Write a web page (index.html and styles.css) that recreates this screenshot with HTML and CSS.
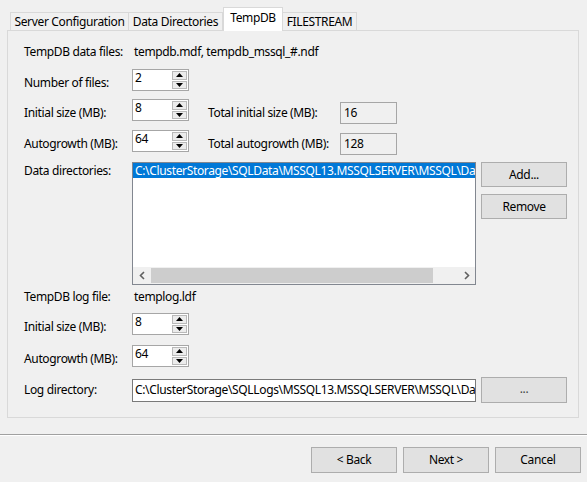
FILE: index.html
```html
<!DOCTYPE html>
<html>
<head>
<meta charset="utf-8">
<title>TempDB</title>
<link rel="stylesheet" href="styles.css">
</head>
<body>
<div class="window">
  <div class="tabs">
    <div class="tab t1">Server Configuration</div>
    <div class="tab t2">Data Directories</div>
    <div class="tab active t3">TempDB</div>
    <div class="tab t4">FILESTREAM</div>
  </div>
  <div class="panel">
    <div class="row row-a">
      <div class="label">TempDB data files:</div>
      <div class="value">tempdb.mdf, tempdb_mssql_#.ndf</div>
    </div>
    <div class="row row-b">
      <div class="label lbl-spin">Number of files:</div>
      <div class="spin">
        <span class="spin-text">2</span>
        <span class="spin-btns">
          <span class="sb"><svg width="7" height="4" viewBox="0 0 7 4"><path d="M0 4 L3.5 0 L7 4Z"/></svg></span>
          <span class="sb"><svg width="7" height="4" viewBox="0 0 7 4"><path d="M0 0 L3.5 4 L7 0Z"/></svg></span>
        </span>
      </div>
    </div>
    <div class="row row-c">
      <div class="label lbl-spin">Initial size (MB):</div>
      <div class="spin">
        <span class="spin-text">8</span>
        <span class="spin-btns">
          <span class="sb"><svg width="7" height="4" viewBox="0 0 7 4"><path d="M0 4 L3.5 0 L7 4Z"/></svg></span>
          <span class="sb"><svg width="7" height="4" viewBox="0 0 7 4"><path d="M0 0 L3.5 4 L7 0Z"/></svg></span>
        </span>
      </div>
      <div class="label2">Total initial size (MB):</div>
      <div class="robox">16</div>
    </div>
    <div class="row row-d">
      <div class="label lbl-spin">Autogrowth (MB):</div>
      <div class="spin">
        <span class="spin-text">64</span>
        <span class="spin-btns">
          <span class="sb"><svg width="7" height="4" viewBox="0 0 7 4"><path d="M0 4 L3.5 0 L7 4Z"/></svg></span>
          <span class="sb"><svg width="7" height="4" viewBox="0 0 7 4"><path d="M0 0 L3.5 4 L7 0Z"/></svg></span>
        </span>
      </div>
      <div class="label2">Total autogrowth (MB):</div>
      <div class="robox">128</div>
    </div>
    <div class="row row-e">
      <div class="label lbl-list">Data directories:</div>
      <div class="listbox">
        <div class="list-item">C:\ClusterStorage\SQLData\MSSQL13.MSSQLSERVER\MSSQL\Data</div>
        <div class="list-fill"></div>
        <div class="hscroll">
          <span class="arrow"><svg width="6" height="9" viewBox="0 0 6 9"><polyline points="5,1 1.5,4.5 5,8" fill="none" stroke="#606060" stroke-width="1.6"/></svg></span>
          <span class="thumb"></span>
          <span class="track"></span>
          <span class="arrow"><svg width="6" height="9" viewBox="0 0 6 9"><polyline points="1,1 4.5,4.5 1,8" fill="none" stroke="#606060" stroke-width="1.6"/></svg></span>
        </div>
      </div>
      <div class="side-btns">
        <div class="btn side-btn">Add...</div>
        <div class="btn side-btn">Remove</div>
      </div>
    </div>
    <div class="row row-f">
      <div class="label">TempDB log file:</div>
      <div class="value">templog.ldf</div>
    </div>
    <div class="row row-g">
      <div class="label lbl-spin">Initial size (MB):</div>
      <div class="spin">
        <span class="spin-text">8</span>
        <span class="spin-btns">
          <span class="sb"><svg width="7" height="4" viewBox="0 0 7 4"><path d="M0 4 L3.5 0 L7 4Z"/></svg></span>
          <span class="sb"><svg width="7" height="4" viewBox="0 0 7 4"><path d="M0 0 L3.5 4 L7 0Z"/></svg></span>
        </span>
      </div>
    </div>
    <div class="row row-h">
      <div class="label lbl-spin">Autogrowth (MB):</div>
      <div class="spin">
        <span class="spin-text">64</span>
        <span class="spin-btns">
          <span class="sb"><svg width="7" height="4" viewBox="0 0 7 4"><path d="M0 4 L3.5 0 L7 4Z"/></svg></span>
          <span class="sb"><svg width="7" height="4" viewBox="0 0 7 4"><path d="M0 0 L3.5 4 L7 0Z"/></svg></span>
        </span>
      </div>
    </div>
    <div class="row row-i">
      <div class="label lbl-input">Log directory:</div>
      <div class="textbox">C:\ClusterStorage\SQLLogs\MSSQL13.MSSQLSERVER\MSSQL\Data</div>
      <div class="btn browse-btn">...</div>
    </div>
  </div>
  <div class="separator"></div>
  <div class="footer">
    <div class="btn foot-btn">&lt; Back</div>
    <div class="btn foot-btn">Next &gt;</div>
    <div class="btn foot-btn">Cancel</div>
  </div>
</div>
</body>
</html>
```
FILE: styles.css
```css
* { box-sizing: border-box; }
html, body {
  margin: 0;
  padding: 0;
  background: #f0f0f0;
}
body {
  font-family: "Noto Sans", "Open Sans", sans-serif;
  font-size: 12px;
  line-height: 16px;
  color: #000;
  letter-spacing: -0.35px;
}
.window {
  width: 587px;
  height: 482px;
  overflow: hidden;
}

/* Tabs */
.tabs {
  display: flex;
  align-items: flex-end;
  height: 30px;
  padding-left: 10px;
}
.tab {
  height: 18px;
  padding-top: 1px;
  border: 1px solid #d9d9d9;
  border-bottom: none;
  background: #f0f0f0;
  text-align: center;
  white-space: nowrap;
}
.t1 { width: 119px; }
.t2 { width: 95px; margin-left: -1px; }
.t3 { width: 60px; }
.t4 { width: 75px; margin-left: -1px; }
.tab.active {
  height: 24px;
  padding-top: 2px;
  background: #ffffff;
  margin-bottom: -1px;
  position: relative;
  z-index: 1;
}

/* Panel */
.panel {
  margin: 0 8px 0 7px;
  height: 388px;
  border: 1px solid #d9d9d9;
  padding-left: 16px;
}
.row {
  display: flex;
  align-items: flex-start;
}
.label {
  width: 108px;
  flex: none;
  white-space: nowrap;
}
.lbl-spin { padding-top: 6px; }
.lbl-list { padding-top: 1px; }
.lbl-input { padding-top: 5px; }
.value {
  margin-left: 2px;
  white-space: nowrap;
}
.row-a { margin-top: 13px; height: 16px; }
.row-b { margin-top: 9px; height: 22px; }
.row-c { margin-top: 8px; height: 22px; }
.row-d { margin-top: 9px; height: 22px; }
.row-e { margin-top: 10px; height: 123px; }
.row-f { margin-top: 4px; height: 16px; }
.row-g { margin-top: 8px; height: 22px; }
.row-h { margin-top: 10px; height: 22px; }
.row-i { margin-top: 10px; height: 26px; }

/* Spinner */
.spin {
  width: 57px;
  height: 22px;
  flex: none;
  display: flex;
  border: 1px solid #a6a6a6;
  background: #fff;
}
.spin-text {
  flex: 1;
  padding: 0 2px;
}
.spin-btns {
  width: 16px;
  display: flex;
  flex-direction: column;
  gap: 1px;
  padding: 1px 1px 1px 0;
}
.sb {
  height: 9px;
  display: flex;
  align-items: center;
  justify-content: center;
  background: #ececec;
  border: 1px solid #b9b9b9;
}
.sb svg { display: block; fill: #000; }

.label2 {
  width: 132px;
  margin-left: 19px;
  padding-top: 6px;
  white-space: nowrap;
}
.robox {
  width: 57px;
  height: 22px;
  margin-top: 3px;
  border: 1px solid #a6a6a6;
  background: #f0f0f0;
  padding: 2px 3px 0;
}

/* Listbox */
.listbox {
  width: 344px;
  height: 123px;
  flex: none;
  border: 1px solid #828790;
  background: #fff;
  display: flex;
  flex-direction: column;
  overflow: hidden;
}
.list-item {
  height: 15px;
  line-height: 15px;
  background: #0078d7;
  color: #fff;
  padding-left: 2px;
  white-space: nowrap;
  overflow: hidden;
}
.list-fill { flex: 1; }
.hscroll {
  height: 17px;
  display: flex;
  background: #f0f0f0;
}
.arrow {
  width: 17px;
  display: flex;
  align-items: center;
  justify-content: center;
}
.arrow svg { display: block; }
.thumb {
  width: 282px;
  margin: 1px 0 1px 1px;
  background: #cdcdcd;
}
.track { flex: 1; }

.side-btns {
  margin-left: 5px;
  display: flex;
  flex-direction: column;
  gap: 7px;
}

/* Buttons */
.btn {
  background: #e1e1e1;
  border: 1px solid #adadad;
  display: flex;
  align-items: center;
  justify-content: center;
  white-space: nowrap;
}
.side-btn { width: 86px; height: 25px; }
.browse-btn { width: 86px; height: 26px; margin-left: 5px; color: #444; padding-bottom: 2px; }

.textbox {
  width: 344px;
  height: 23px;
  margin-top: 2px;
  flex: none;
  border: 1px solid #7a7a7a;
  background: #fff;
  padding: 2px 2px 0;
  white-space: nowrap;
  overflow: hidden;
}

/* Footer */
.separator {
  margin-top: 16px;
  border-top: 1px solid #a0a0a0;
  border-bottom: 1px solid #ffffff;
}
.footer {
  margin-top: 11px;
  display: flex;
  justify-content: flex-end;
  gap: 6px;
  padding-right: 6px;
}
.foot-btn { width: 86px; height: 26px; }
```
